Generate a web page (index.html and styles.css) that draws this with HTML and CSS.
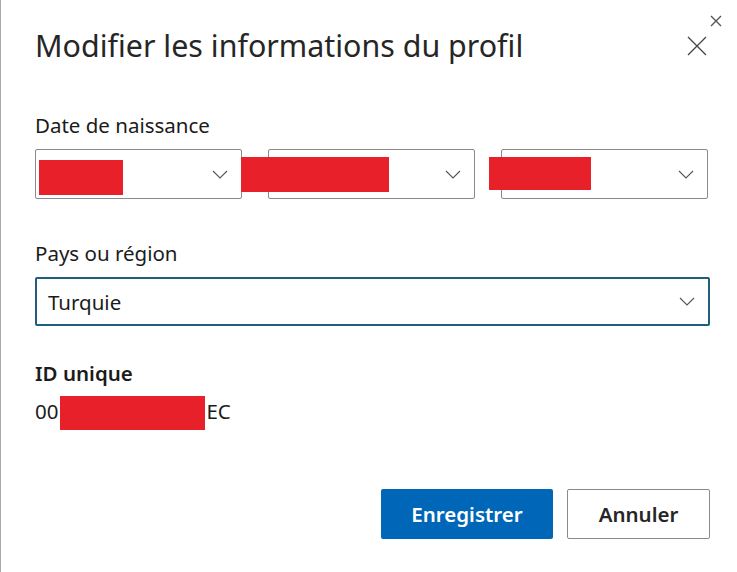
FILE: index.html
```html
<!DOCTYPE html>
<html lang="fr">
<head>
    <meta charset="UTF-8">
    <meta name="viewport" content="width=device-width, initial-scale=1.0">
    <title>Modifier les informations du profil</title>
    <link rel="stylesheet" href="styles.css">
</head>
<body>
    <button class="window-close" aria-label="Fermer la fenêtre">
        <svg width="12" height="12" viewBox="0 0 12 12"><path d="M1 1L11 11M11 1L1 11" stroke="#555" stroke-width="1.4" fill="none"/></svg>
    </button>

    <div class="dialog">
        <div class="dialog-header">
            <h1>Modifier les informations du profil</h1>
            <button class="close-btn" aria-label="Fermer">
                <svg width="20" height="20" viewBox="0 0 20 20"><path d="M1 1L19 19M19 1L1 19" stroke="#444" stroke-width="1.3" fill="none"/></svg>
            </button>
        </div>

        <div class="field">
            <div class="label">Date de naissance</div>
            <div class="date-row">
                <div class="select">
                    <span class="redact redact-day"></span>
                    <svg class="chevron" width="16" height="9" viewBox="0 0 16 9"><path d="M1 1L8 8L15 1" stroke="#555" stroke-width="1.1" fill="none"/></svg>
                </div>
                <div class="select">
                    <span class="redact redact-month"></span>
                    <svg class="chevron" width="16" height="9" viewBox="0 0 16 9"><path d="M1 1L8 8L15 1" stroke="#555" stroke-width="1.1" fill="none"/></svg>
                </div>
                <div class="select">
                    <span class="redact redact-year"></span>
                    <svg class="chevron" width="16" height="9" viewBox="0 0 16 9"><path d="M1 1L8 8L15 1" stroke="#555" stroke-width="1.1" fill="none"/></svg>
                </div>
            </div>
        </div>

        <div class="field field-country">
            <div class="label">Pays ou région</div>
            <div class="select select-focus">
                <span class="value">Turquie</span>
                <svg class="chevron" width="16" height="9" viewBox="0 0 16 9"><path d="M1 1L8 8L15 1" stroke="#555" stroke-width="1.1" fill="none"/></svg>
            </div>
        </div>

        <div class="field field-id">
            <div class="label label-bold">ID unique</div>
            <div class="id-value">00<span class="redact redact-id"></span>EC</div>
        </div>

        <div class="actions">
            <button class="btn btn-primary">Enregistrer</button>
            <button class="btn btn-secondary">Annuler</button>
        </div>
    </div>
</body>
</html>
```

FILE: styles.css
```css
html, body {
    margin: 0;
    padding: 0;
}

body {
    font-family: "Noto Sans", "Open Sans", sans-serif;
    color: #1b1b1b;
    background: #fff;
    width: 737px;
    height: 572px;
    box-sizing: border-box;
    border-left: 1px solid #a9a9a9;
    position: relative;
    overflow: hidden;
}

.window-close {
    position: absolute;
    top: 14px;
    right: 14px;
    width: 14px;
    height: 14px;
    padding: 0;
    border: none;
    background: none;
    display: flex;
    align-items: center;
    justify-content: center;
}

.dialog {
    padding: 26px 27px 0 34px;
}

.dialog-header {
    display: flex;
    justify-content: space-between;
    align-items: center;
    height: 40px;
}

h1 {
    margin: 0;
    font-size: 30.4px;
    font-weight: 400;
    line-height: 40px;
    color: #262626;
}

.close-btn {
    width: 20px;
    height: 20px;
    padding: 0;
    margin-right: 3px;
    border: none;
    background: none;
    display: flex;
}

.field {
    margin-top: 46px;
}

.label {
    font-size: 20.5px;
    line-height: 26px;
    margin-bottom: 11px;
}

.label-bold {
    font-weight: 600;
}

.date-row {
    display: grid;
    grid-template-columns: repeat(3, 207px);
    column-gap: 26px;
}

.select {
    position: relative;
    height: 50px;
    box-sizing: border-box;
    border: 1px solid #8a8a8a;
    border-radius: 2px;
    display: flex;
    align-items: center;
    justify-content: space-between;
    padding: 0 12px 0 12px;
}

.select .chevron {
    margin-left: auto;
    margin-right: 1px;
}

.select-focus {
    border: 2px solid #1f5f7c;
    height: 49px;
    padding-left: 11px;
}

.field-country {
    margin-top: 41px;
}

.value {
    font-size: 20.5px;
}

.redact {
    position: absolute;
    background: #e8202a;
}

.redact-day {
    left: 3px;
    top: 10px;
    width: 84px;
    height: 35px;
}

.redact-month {
    left: -28px;
    top: 7px;
    width: 148px;
    height: 35px;
}

.redact-year {
    left: -13px;
    top: 7px;
    width: 102px;
    height: 33px;
}

.field-id {
    margin-top: 34px;
}

.field-id .label {
    margin-bottom: 10px;
}

.id-value {
    position: relative;
    font-size: 20.5px;
    line-height: 26px;
}

.redact-id {
    position: relative;
    display: inline-block;
    vertical-align: middle;
    width: 145px;
    height: 34px;
    margin: 0 1px 0 2px;
}

.actions {
    margin-top: 59px;
    display: flex;
    justify-content: flex-end;
    gap: 14px;
}

.btn {
    height: 50px;
    border-radius: 2px;
    font-family: inherit;
    font-size: 20.5px;
    font-weight: 600;
    cursor: pointer;
}

.btn-primary {
    width: 172px;
    background: #0067b8;
    color: #fff;
    border: none;
}

.btn-secondary {
    width: 143px;
    background: #fff;
    color: #262626;
    border: 1px solid #8a8a8a;
}
```
